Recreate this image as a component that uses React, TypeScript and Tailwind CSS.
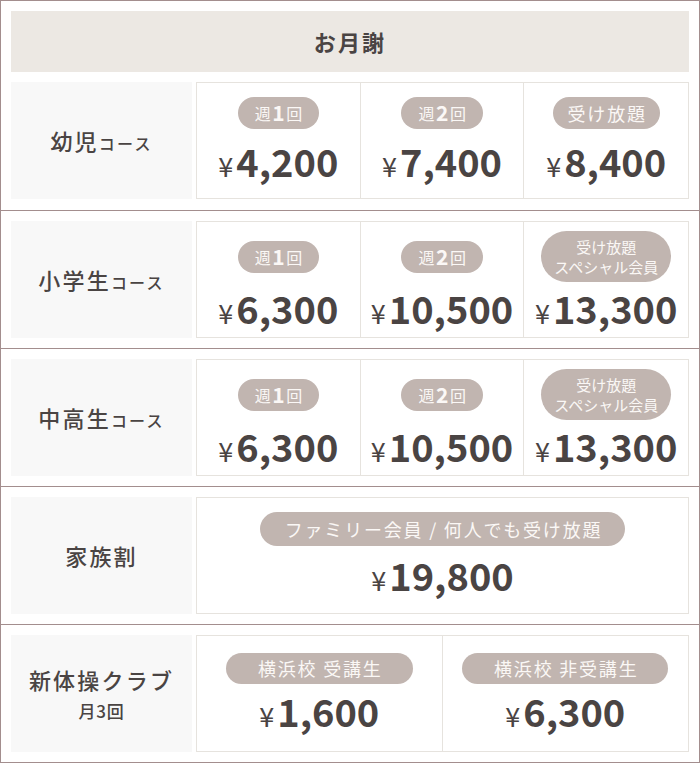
import type { ReactNode } from "react";

const font = { fontFamily: '"Noto Sans CJK JP", "Noto Sans", sans-serif' };

function Pill({ children, className = "" }: { children: ReactNode; className?: string }) {
  return (
    <span
      className={`inline-flex items-center justify-center rounded-full bg-[#c1b5b0] text-[#fbf8f6] tracking-[0.1em] ${className}`}
    >
      {children}
    </span>
  );
}

function Weekly({ n }: { n: string }) {
  return (
    <Pill className="h-[32px] pl-[17px] pr-[15px] text-[16px] leading-none">
      週<span className="text-[21px] font-bold">{n}</span>回
    </Pill>
  );
}

function Unlimited() {
  return <Pill className="h-[32px] pl-[15px] pr-[13px] text-[18px] leading-none">受け放題</Pill>;
}

function Special() {
  return (
    <Pill className="h-[51px] px-[13px] text-[15px] leading-[20px] tracking-normal text-center">
      受け放題
      <br />
      スペシャル会員
    </Pill>
  );
}

function Price({ value }: { value: string }) {
  return (
    <div className="flex h-[48px] items-baseline justify-center text-[#4a4443] leading-[48px]">
      <span className="mr-[3px] text-[27px]">¥</span>
      <span className="text-[38px] font-bold">{value}</span>
    </div>
  );
}

function Label({ children }: { children: ReactNode }) {
  return (
    <div className="flex w-[181px] shrink-0 flex-col items-center justify-center bg-[#f8f8f8] text-[22px] font-medium tracking-[0.1em] text-[#4a4443]">
      {children}
    </div>
  );
}

function Cell({ pill, price, area, gap }: { pill: ReactNode; price: string; area: string; gap: string }) {
  return (
    <div className="flex flex-col items-center justify-center">
      <div className={`flex items-center justify-center ${area}`}>{pill}</div>
      <div className={gap}>
        <Price value={price} />
      </div>
    </div>
  );
}

const rowCls = "flex gap-[4px] h-[117px]";
const boxCls = "flex-1 grid border border-[#e6e3de] divide-x divide-[#e6e3de] bg-white";

export default function App() {
  return (
    <div style={font} className="w-[700px] border border-[#a38e8e] bg-white">
      {/* 幼児 */}
      <section className="border-b border-[#a38e8e] px-[10px] pt-[10px] pb-[11px]">
        <div className="flex h-[61px] items-center justify-center bg-[#ece8e3] text-[22px] font-bold tracking-[0.1em] text-[#4a4443]">
          お月謝
        </div>
        <div className={`${rowCls} mt-[10px]`}>
          <Label>
            <div>
              幼児<span className="text-[16px]">コース</span>
            </div>
          </Label>
          <div className={`${boxCls} grid-cols-3`}>
            <Cell pill={<Weekly n="1" />} price="4,200" area="h-[32px]" gap="mt-[8px]" />
            <Cell pill={<Weekly n="2" />} price="7,400" area="h-[32px]" gap="mt-[8px]" />
            <Cell pill={<Unlimited />} price="8,400" area="h-[32px]" gap="mt-[8px]" />
          </div>
        </div>
      </section>

      {/* 小学生 */}
      <section className="border-b border-[#a38e8e] p-[10px]">
        <div className={rowCls}>
          <Label>
            <div>
              小学生<span className="text-[16px]">コース</span>
            </div>
          </Label>
          <div className={`${boxCls} grid-cols-3`}>
            <Cell pill={<Weekly n="1" />} price="6,300" area="h-[51px] mt-[4px]" gap="mt-[2px]" />
            <Cell pill={<Weekly n="2" />} price="10,500" area="h-[51px] mt-[4px]" gap="mt-[2px]" />
            <Cell pill={<Special />} price="13,300" area="h-[51px] mt-[4px]" gap="mt-[2px]" />
          </div>
        </div>
      </section>

      {/* 中高生 */}
      <section className="border-b border-[#a38e8e] p-[10px]">
        <div className={rowCls}>
          <Label>
            <div>
              中高生<span className="text-[16px]">コース</span>
            </div>
          </Label>
          <div className={`${boxCls} grid-cols-3`}>
            <Cell pill={<Weekly n="1" />} price="6,300" area="h-[51px] mt-[4px]" gap="mt-[2px]" />
            <Cell pill={<Weekly n="2" />} price="10,500" area="h-[51px] mt-[4px]" gap="mt-[2px]" />
            <Cell pill={<Special />} price="13,300" area="h-[51px] mt-[4px]" gap="mt-[2px]" />
          </div>
        </div>
      </section>

      {/* 家族割 */}
      <section className="border-b border-[#a38e8e] p-[10px]">
        <div className={rowCls}>
          <Label>
            <div>家族割</div>
          </Label>
          <div className={`${boxCls} grid-cols-1`}>
            <Cell
              pill={
                <Pill className="h-[34px] pl-[25px] pr-[23px] text-[18px] leading-none">
                  ファミリー会員 / 何人でも受け放題
                </Pill>
              }
              price="19,800"
              area="h-[34px]"
              gap="mt-[5px]"
            />
          </div>
        </div>
      </section>

      {/* 新体操クラブ */}
      <section className="p-[10px]">
        <div className={rowCls}>
          <Label>
            <div className="leading-[30px]">新体操クラブ</div>
            <div className="mt-[4px] text-[17px] leading-[26px] tracking-[0.05em]">月3回</div>
          </Label>
          <div className={`${boxCls} grid-cols-2`}>
            <Cell
              pill={<Pill className="h-[31px] pl-[32px] pr-[30px] text-[18px] leading-none">横浜校 受講生</Pill>}
              price="1,600"
              area="h-[31px]"
              gap="mt-[3px]"
            />
            <Cell
              pill={<Pill className="h-[31px] pl-[32px] pr-[30px] text-[18px] leading-none">横浜校 非受講生</Pill>}
              price="6,300"
              area="h-[31px]"
              gap="mt-[3px]"
            />
          </div>
        </div>
      </section>
    </div>
  );
}
